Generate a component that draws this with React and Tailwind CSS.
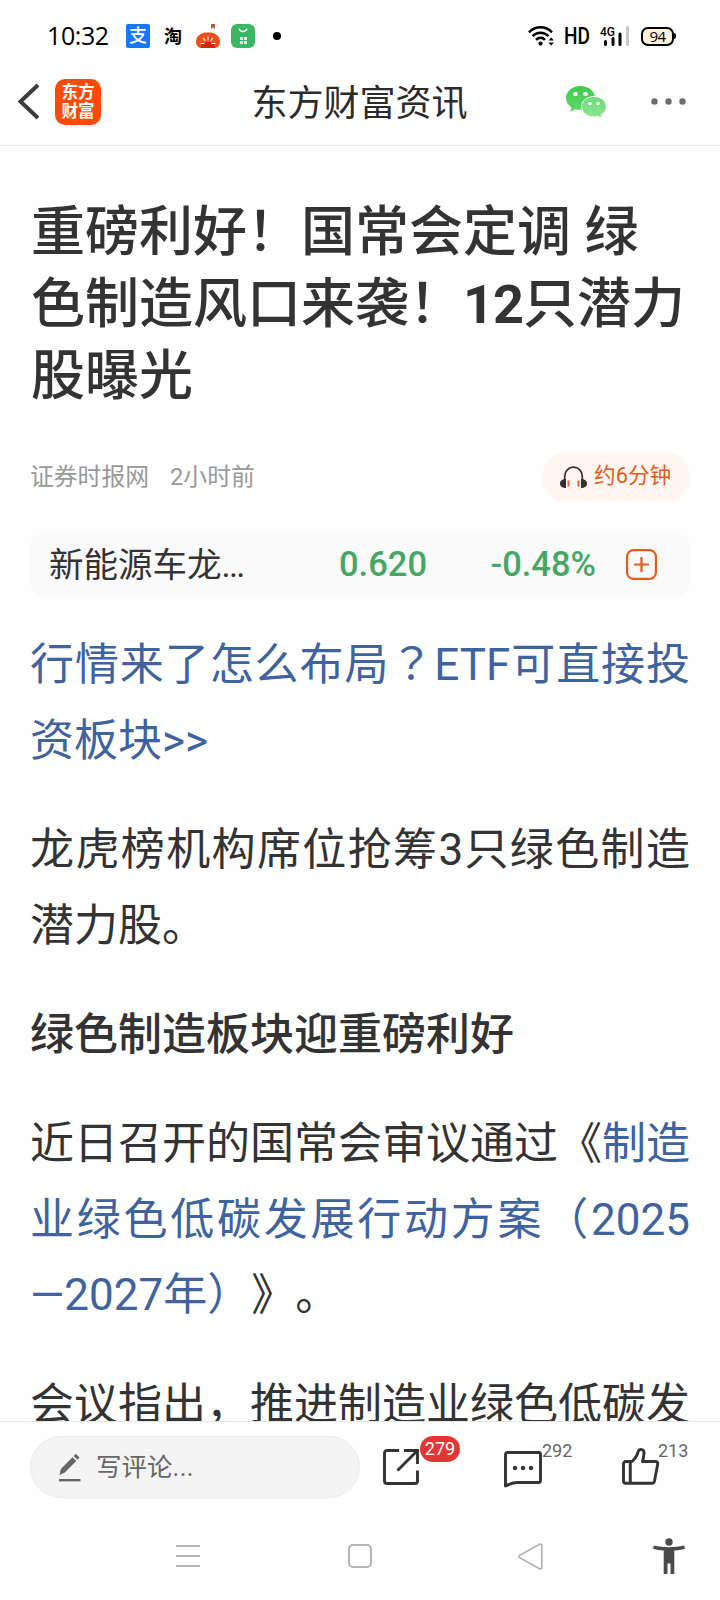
import React from 'react';

const StatusBar = () => (
  <div className="h-[72px] flex items-center pl-[47px] pr-[46px] text-black">
    <span className="w-[79px] pb-0.5 text-[25px] leading-none font-['Open_Sans','Noto_Sans',sans-serif] tracking-[-0.4px]">10:32</span>
    <span className="w-6 h-6 rounded-[2px] bg-[#1777ff] text-white text-[18px] font-medium flex items-center justify-center leading-none">支</span>
    <span className="ml-[14px] w-[20px] pt-0.5 text-[18px] font-bold leading-none">淘</span>
    <svg className="ml-[11px] w-[26px] h-6" viewBox="0 0 26 24">
      <path d="M16 0h4v5l-2-1.400L16 5z" fill="#b8583c" />
      <path d="M5 10.500c2-1.700 5-2 8-2s6 .3 8 2c2.500 1.500 4 4 4 7 0 4-2 6.500-6 6.500H7c-4 0-6-2.500-6-6.500 0-3 1.500-5.500 4-7z" fill="#e8511d" />
      <path d="M6 24c0-3.500 3-6 7-6s7 2.500 7 6z" fill="#d02a0c" />
      <path d="M6 19.500h3M17 19.500h3M8.500 14.500l1.500 2M13 13v3M17.500 14.500l-1.500 2" stroke="#fff" strokeWidth="1.200" strokeLinecap="round" />
    </svg>
    <svg className="ml-[10px] w-6 h-6" viewBox="0 0 24 24">
      <rect width="24" height="24" rx="6" fill="#3bb764" />
      <path d="M8 4.500c1 4 7 4 8 0" fill="none" stroke="#fff" strokeWidth="1.300" />
      <path d="M9 13h3v3H9zM13 13h3v3h-3zM9 17h3v3H9zM13 17h3v3h-3z" fill="#d9f5e1" />
    </svg>
    <span className="ml-[18px] w-2 h-2 rounded-full bg-black" />
    <div className="ml-auto flex items-center">
      <svg className="w-[27px] h-[20px]" viewBox="0 0 27 20" fill="none" stroke="#000" strokeWidth="2.500">
        <path d="M1 6.300C7.500-.4 17.500-.4 24 6.300" />
        <path d="M4.500 10.200c4.600-4.600 11.400-4.600 16 0" />
        <path d="M8 13.800c2.700-2.600 6.300-2.600 9 0" />
        <circle cx="12.500" cy="17.600" r="2.100" fill="#000" stroke="none" />
        <path d="M20.500 14.500l2.700-3 2.700 3zM20.500 16.500l2.700 3 2.700-3z" fill="#000" stroke="none" />
      </svg>
      <svg className="ml-[9px] w-[26px] h-5 overflow-visible" viewBox="0 0 26 20">
        <text x="0" y="17.800" fontSize="23" fontWeight="500" fontFamily="Roboto" textLength="26" lengthAdjust="spacingAndGlyphs">HD</text>
      </svg>
      <svg className="ml-[10px] w-[30px] h-5 overflow-visible" viewBox="0 0 30 20">
        <text x="0" y="10" fontSize="13.500" fontWeight="500" fontFamily="Roboto" textLength="15" lengthAdjust="spacingAndGlyphs">4G</text>
        <g strokeWidth="3" strokeLinecap="round">
          <path d="M5.500 15.500v3M13 12.500v6M20 8v10.500" stroke="#000" />
          <path d="M27.500 1.500v17" stroke="#c8c8c8" />
        </g>
      </svg>
      <div className="ml-[11px] relative w-[33px] h-[19px] rounded-[7px] border-2 border-black bg-[#fdf1dc] flex items-center justify-center">
        <span className="text-[15px] leading-none font-['Open_Sans','Noto_Sans',sans-serif] tracking-[-0.500px]">94</span>
        <span className="absolute -right-[4px] top-[4.500px] w-[2px] h-[6px] rounded-r bg-black" />
      </div>
    </div>
  </div>
);

const Header = () => (
  <header className="h-[74px] border-b border-[#e9e9e9] flex items-center justify-between pl-[17px] pr-[34px] pb-[14px] text-[#2b2b2b]">
    <div className="w-[180px] flex items-center">
      <svg className="w-[23px] h-[37px]" viewBox="0 0 23 37" fill="none" stroke="#3a3d40" strokeWidth="4">
        <path d="M21 2L3.500 18.500 21 35" />
      </svg>
      <div className="ml-[15px] w-[46px] h-[46px] rounded-[10px] bg-[#fb4b08] text-white text-[16.500px] leading-[19px] font-bold flex flex-col items-center justify-center">
        <span>东方</span>
        <span>财富</span>
      </div>
    </div>
    <h1 className="pt-1 text-[36px] leading-none">东方财富资讯</h1>
    <div className="w-[164px] flex items-center justify-end">
      <svg className="w-[42px] h-[34px]" viewBox="0 0 42 34">
        <defs>
          <linearGradient id="chat-back" x1="0" y1="0" x2="0" y2="1">
            <stop offset="0" stopColor="#3fcb4b" />
            <stop offset="1" stopColor="#62d96b" />
          </linearGradient>
          <linearGradient id="chat-front" x1="0" y1="0" x2="0" y2="1">
            <stop offset="0" stopColor="#6fda78" />
            <stop offset="1" stopColor="#8ee695" />
          </linearGradient>
        </defs>
        <path d="M15.500 1C7.500 1 1 6.200 1 13c0 4 2 7.200 5.300 9.400L5.300 27l5-2.700c1.700.5 3.400.7 5.200.7C23.500 25 30 19.800 30 13S23.500 1 15.500 1z" fill="url(#chat-back)" />
        <path d="M29 11.500c-7 0-12.500 4.500-12.500 10.200S22 32 29 32c1.400 0 2.800-.2 4-.6l4 2-.8-3.500c3.200-1.900 5.200-4.800 5.200-8.200 0-5.700-5.400-10.200-12.400-10.200z" fill="url(#chat-front)" stroke="#fff" strokeWidth="1" />
        <g fill="#fff">
          <circle cx="10.500" cy="9" r="2.300" />
          <circle cx="20.500" cy="9" r="2.300" />
          <circle cx="25" cy="18.500" r="1.700" />
          <circle cx="33" cy="18.500" r="1.700" />
        </g>
      </svg>
      <svg className="ml-[44px] w-[35px] h-[7px]" viewBox="0 0 35 7" fill="#6b6b6b">
        <circle cx="3.500" cy="3.500" r="3.200" />
        <circle cx="17.500" cy="3.500" r="3.200" />
        <circle cx="31.500" cy="3.500" r="3.200" />
      </svg>
    </div>
  </header>
);

const Line = ({ children }) => <span className="block whitespace-nowrap [text-align-last:justify]">{children}</span>;

const Article = () => (
  <main className="h-[1275px] overflow-hidden px-[30px] pt-[51px] text-[#333] [text-spacing-trim:space-all]">
    <h2 className="pl-px text-[54px] leading-[72px] font-medium whitespace-nowrap">
      重磅利好！国常会定调 绿<br />色制造风口来袭！<b className="font-bold tracking-[-1px]">12</b>只潜力<br />股曝光
    </h2>

    <div className="mt-[39px] h-[50px] flex items-center text-[23.800px] leading-none text-[#999]">
      <span className="w-[140px] pt-px">证券时报网</span>
      <span className="pt-px">2小时前</span>
      <button className="ml-auto w-[148px] h-[50px] rounded-full bg-[#fff5f1] flex items-center pl-[18px] pb-0.5 text-[21.700px] text-[#dd5f1f]">
        <svg className="w-[27px] h-[22px] mr-[7px] mt-0.5" viewBox="0 0 27 22">
          <path d="M4.700 14V10a8.800 8.800 0 0 1 17.600 0v4" fill="none" stroke="#333" strokeWidth="1.700" />
          <path d="M6 13v9C2.500 22 0 20.500 0 17.500S2.500 13 6 13zM21 13v9c3.500 0 6-1.500 6-4.500S24.500 13 21 13z" fill="#333" />
          <path d="M8.500 14.500v6M18.500 14.500v6" stroke="#dd6a2d" strokeWidth="2" />
        </svg>
        约6分钟
      </button>
    </div>

    <div className="-mx-px mt-[30px] h-[65px] rounded-[18px] bg-[#fafafa] flex items-center pl-[20px] pr-[34px] text-[34.500px] leading-none">
      <span className="w-[290px] pt-px">新能源车龙<span className="tracking-[-1.700px]">...</span></span>
      <span className="font-medium text-[#46a765]">0.620</span>
      <span className="ml-auto font-medium text-[#46a765]">-0.48%</span>
      <svg className="ml-[30px] w-[31px] h-[31px]" viewBox="0 0 31 31" fill="none" stroke="#dd5f1f" strokeWidth="2.200">
        <rect x="1.100" y="1.100" width="28.800" height="28.800" rx="6.500" />
        <path d="M8 15.500h15M15.500 8v15" />
      </svg>
    </div>

    <div className="mt-[31px] text-[44px] leading-[75.700px] space-y-[33.500px]">
      <p className="text-[#3f639f]">
        <Line>行情来了怎么布局<span className="leading-none font-['Noto_Sans_CJK_TC',sans-serif]" lang="zh-TW">？</span>ETF可直接投</Line>
        资板块&gt;&gt;
      </p>
      <p>
        <Line>龙虎榜机构席位抢筹3只绿色制造</Line>
        潜力股。
      </p>
      <p className="font-medium">绿色制造板块迎重磅利好</p>
      <p>
        <Line>近日召开的国常会审议通过《<a className="text-[#3f639f]">制造</a></Line>
        <Line><a className="text-[#3f639f]">业绿色低碳发展行动方案（2025</a></Line>
        <a className="text-[#3f639f]">—2027年）</a>》。
      </p>
      <p>
        <Line>会议指出，推进制造业绿色低碳发</Line>
      </p>
    </div>
  </main>
);

const CommentBar = () => (
  <div className="relative h-[90px] border-t border-[#e6e6e6] flex items-start pl-[30px] pt-[14px] text-[#333]">
    <div className="w-[330px] h-[62px] rounded-full border border-[#ebebeb] bg-[#f4f4f4] flex items-center pl-7 text-[25.500px] leading-none text-[#666]">
      <svg className="w-[22px] h-[29px] mr-[15px]" viewBox="0 0 22 29" fill="#666">
        <path d="M.5 22l1.300-6L13.500 4.200l3.800 3.800L5.600 19.700z" />
        <path d="M14.700 3l2-2.200 3.800 3.800-2 2.200z" />
        <path d="M0 26h21.500v2.400H0z" />
      </svg>
      <span className="pt-0.5">写评论<span className="tracking-[0.4px]">...</span></span>
    </div>
    <div className="ml-[23px] mt-[13px] relative">
      <svg className="w-[36px] h-[36px]" viewBox="0 0 36 36" fill="none" stroke="#333" strokeWidth="2.900">
        <path d="M16 1.500H4A2.500 2.500 0 0 0 1.500 4v28A2.500 2.500 0 0 0 4 34.500h28a2.500 2.500 0 0 0 2.500-2.500V21.500M21 1.500h13.500V15M34 2L14.500 21.500" />
      </svg>
      <span className="absolute left-[37px] -top-[13px] w-10 h-[26px] rounded-full bg-[#e23535] text-white text-[18px] leading-[26px] text-center">279</span>
    </div>
    <div className="ml-[85px] mt-[15px] relative">
      <svg className="w-[38px] h-[37px]" viewBox="0 0 38 37" fill="none" stroke="#333" strokeWidth="2.900" strokeLinejoin="round">
        <path d="M3.500 1.500h31a2 2 0 0 1 2 2v26a2 2 0 0 1-2 2H13c-5 0-6 1.300-11.500 3.500V3.500a2 2 0 0 1 2-2z" />
        <g fill="#333" stroke="none">
          <circle cx="11" cy="17" r="2.200" />
          <circle cx="19" cy="17" r="2.200" />
          <circle cx="27" cy="17" r="2.200" />
        </g>
      </svg>
      <span className="absolute left-[38px] -top-[10px] text-[18px] leading-5 text-[#666]">292</span>
    </div>
    <div className="ml-[80px] mt-[12px] relative">
      <svg className="w-[37px] h-[37px]" viewBox="0 0 37 37" fill="none" stroke="#333" strokeWidth="2.900" strokeLinejoin="round">
        <path d="M3.800 13.500H10c2.600-2.200 5.200-6 6.300-10.300.8-2.600 6.200-2.200 5.700 2.300-.3 2.800-.7 5.300-1.500 8h12.800c1.700 0 2.700 1 2.400 2.600L32.500 33c-.3 1.400-1.200 2.200-2.600 2.200H3.800a2.300 2.300 0 0 1-2.300-2.300V15.800a2.300 2.300 0 0 1 2.300-2.300zM8.300 13.500v21.700" />
      </svg>
      <span className="absolute left-[36px] -top-[7px] text-[18px] leading-5 text-[#666]">213</span>
    </div>
  </div>
);

const NavBar = () => (
  <nav className="h-[89px] flex items-center pl-[176px] pt-px">
    <svg className="w-6 h-6" viewBox="0 0 24 24" stroke="#b5b5b5" strokeWidth="2">
      <path d="M0 2h24M0 12h24M0 22h24" />
    </svg>
    <span className="ml-[148px] w-6 h-6 rounded-[5px] border-2 border-[#b5b5b5]" />
    <svg className="ml-[146px] w-[25px] h-[27px]" viewBox="0 0 25 27" fill="none" stroke="#b5b5b5" strokeWidth="1.800" strokeLinejoin="round">
      <path d="M1.800 12.200L21.500 1.300c1.200-.6 2.300 0 2.300 1.300v21.800c0 1.300-1.100 1.900-2.300 1.300L1.800 14.800c-1.100-.7-1.100-1.900 0-2.600z" />
    </svg>
    <svg className="ml-[110px] w-[32px] h-[36px]" viewBox="0 0 32 36" fill="#4a4a4a">
      <circle cx="16" cy="4" r="3.700" />
      <path d="M.8 7.500C10 9.800 22 9.800 31.200 7.500l.8 3.200c-3.500 1-7 1.500-10.700 1.800V36h-3.800V25.500h-3V36h-3.800V12.500C7 12.200 3.500 11.700 0 10.700z" />
    </svg>
  </nav>
);

const App = () => (
  <div className="w-[720px] h-[1600px] overflow-hidden bg-[#fefefe] font-['Roboto','Noto_Sans_CJK_SC',sans-serif]" lang="zh-CN">
    <StatusBar />
    <Header />
    <Article />
    <CommentBar />
    <NavBar />
  </div>
);

export default App;
